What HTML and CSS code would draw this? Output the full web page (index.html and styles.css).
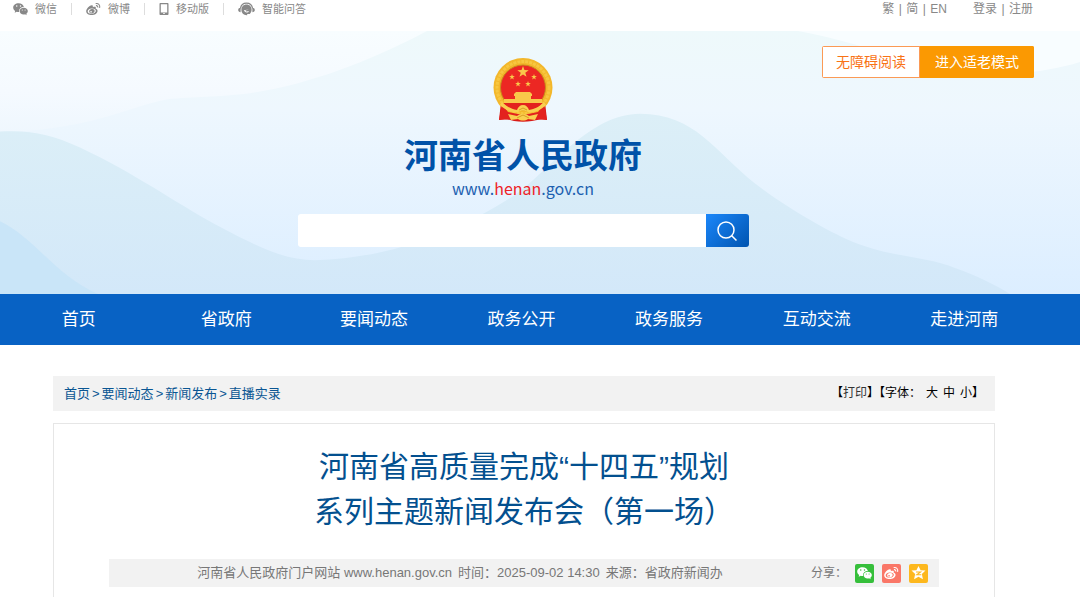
FILE: index.html
```
<!DOCTYPE html>
<html lang="zh-CN">
<head>
    <meta charset="utf-8">
    <title>河南省人民政府</title>
    <link rel="stylesheet" href="styles.css">
</head>
<body>
    <!-- Shared icons -->
    <svg class="sprite" aria-hidden="true">
        <symbol id="icon-wechat" viewBox="0 0 16 14">
            <path fill-rule="evenodd" d="M6 .8C2.7.8.2 2.8.2 5.4c0 1.500.8 2.800 2.100 3.700L1.800 11l2.200-1.200c.6.2 1.300.3 2 .3h.4C6.200 6.900 8.500 4.900 11.600 4.900 11.100 2.500 8.800.8 6 .8zM4 3.100a.8.8 0 1 1 0 1.600.8.8 0 0 1 0-1.600zm4 0a.8.8 0 1 1 0 1.600.8.8 0 0 1 0-1.600z"/>
            <path fill-rule="evenodd" d="M11.400 5.600c-2.500 0-4.400 1.600-4.400 3.600s1.900 3.700 4.400 3.700c.5 0 1-.1 1.500-.2l1.700.9-.4-1.500c1-.7 1.600-1.700 1.600-2.900 0-2-1.900-3.600-4.400-3.600zM9.900 7.400a.6.6 0 1 1 0 1.200.6.6 0 0 1 0-1.200zm3 0a.6.6 0 1 1 0 1.200.6.6 0 0 1 0-1.200z"/>
        </symbol>
        <symbol id="icon-weibo" viewBox="0 0 16 14">
            <path fill-rule="evenodd" d="M6.500 3.100c.9.200 1 .9.700 1.900 1.700-.7 3.500-.7 3.300.9l-.2.900c1.300.4 2 1.100 2 2.200 0 2.300-2.900 4.500-6.300 4.500C2.700 13.500.2 11.900.2 9.500c0-2.800 4.200-6.900 6.300-6.400zM6 6.500C3.500 6.600 1.700 8 1.800 9.700c.1 1.600 2.100 2.600 4.500 2.400 2.400-.2 4.300-1.600 4.200-3.200C10.400 7.300 8.400 6.400 6 6.500z"/>
            <path fill-rule="evenodd" d="M6.200 7.100c1.800-.3 3.200.7 3 2.200-.2 1.300-1.600 2.400-3.200 2.400s-2.800-1.100-2.600-2.400c.1-1.100 1.400-2 2.800-2.200zM5.400 9a.9.900 0 1 0 0 1.800.9.900 0 0 0 0-1.800z"/>
            <path class="stroke" d="M10.300 1.200c3-.6 5 1.700 4.200 4.700M10.600 3.400c1.400-.2 2.200.7 1.900 2"/>
        </symbol>
        <symbol id="icon-phone" viewBox="0 0 10 14">
            <path fill-rule="evenodd" d="M1.500 1h7c.6 0 1 .4 1 1v10c0 .6-.4 1-1 1h-7c-.6 0-1-.4-1-1V2c0-.6.4-1 1-1zm.3 1.300v8.200h6.400V2.300zM4 11.200v.8h2v-.8z"/>
        </symbol>
        <symbol id="icon-service" viewBox="0 0 17 14">
            <path class="stroke" d="M2.400 6.500C3 3 5.400 1.200 8.500 1.200S14 3 14.600 6.500"/>
            <path d="M2.600 5.800v4.400C1.200 10.200.2 9.300.2 8s1-2.200 2.400-2.200zM14.400 5.800v4.400c1.400 0 2.400-.9 2.400-2.200s-1-2.200-2.400-2.200z"/>
            <path fill-rule="evenodd" d="M8.500 2.600c3 0 5.100 2.200 5.100 5.200 0 1.700-.7 3.100-1.800 4.100H9.200v1.300C5.900 13.500 3.400 11.100 3.400 7.800c0-3 2.100-5.200 5.100-5.200zM6.100 8c0 2.600 3.600 3.300 5.100 1.200H9.400C8.600 9.900 7.600 9.500 7.500 8.600L11.500 7.300C10.600 7.600 6.900 8.100 6.100 8z"/>
        </symbol>
        <symbol id="star" viewBox="-10 -10 20 20">
            <path d="M0-10 2.400-3.200 9.500-3.100 3.800 1.200 5.900 8.100 0 4-5.900 8.100-3.800 1.200-9.500-3.100-2.400-3.200z"/>
        </symbol>
    </svg>

    <!-- Top bar -->
    <div class="topbar">
        <div class="top-links">
            <a href="#"><svg class="icon"><use href="#icon-wechat"/></svg>微信</a>
            <a href="#"><svg class="icon"><use href="#icon-weibo"/></svg>微博</a>
            <a href="#"><svg class="icon icon-narrow"><use href="#icon-phone"/></svg>移动版</a>
            <a href="#"><svg class="icon icon-wide"><use href="#icon-service"/></svg>智能问答</a>
        </div>
        <div class="top-right">
            <a href="#">繁</a><span class="bar">|</span><a href="#">简</a><span class="bar">|</span><a href="#">EN</a>
            <a class="login" href="#">登录</a><span class="bar">|</span><a href="#">注册</a>
        </div>
    </div>

    <!-- Banner -->
    <header class="banner">
        <svg class="waves" viewBox="0 0 1080 264" preserveAspectRatio="none" aria-hidden="true">
            <defs>
                <linearGradient id="sky" x1="0" y1="0" x2="0" y2="1">
                    <stop offset="0" stop-color="#eef9fb"/>
                    <stop offset=".3" stop-color="#eef7fe"/>
                    <stop offset="1" stop-color="#dceeff"/>
                </linearGradient>
                <linearGradient id="glow" x1="0" y1="0" x2="0" y2="1">
                    <stop offset="0" stop-color="#f8fdff"/>
                    <stop offset=".6" stop-color="#f5faff"/>
                    <stop offset="1" stop-color="#eff7fe"/>
                </linearGradient>
                <linearGradient id="hill" x1="0" y1="0" x2="0" y2="1">
                    <stop offset="0" stop-color="#dceff7"/>
                    <stop offset="1" stop-color="#d3e8f9"/>
                </linearGradient>
            </defs>
            <rect width="1080" height="264" fill="url(#sky)"/>
            <path fill="url(#glow)" d="M0 0H427C390 20 335 45 275 58 230 67 205 65 172 68 130 74 100 98 0 102z"/>
            <path fill="#f8fdff" d="M798 0C840 8 870 18 905 29 960 47 1030 47 1080 31V0z"/>
            <path fill="url(#hill)" d="M0 101C30 99 52 104 80 117 135 143 175 172 215 194 260 218 285 230 315 230 400 228 470 194 517 163 550 139 590 83 640 83 695 83 715 121 755 153 790 180 840 208 862 215 895 227 930 227 955 238 980 247 995 255 1010 264H0z"/>
            <path fill="#c9e5f8" d="M0 191C35 208 55 245 98 264H0z"/>
        </svg>

        <div class="modes">
            <a class="mode" href="#">无障碍阅读</a>
            <a class="mode mode-on" href="#">进入适老模式</a>
        </div>

        <div class="brand">
            <svg class="emblem" viewBox="0 0 60 64" aria-hidden="true">
                <path fill="#d81b17" d="M8 44 6 62c6-2 11 0 15 1 6 1 12 1 18 0 5-1 10-3 15-1l-2-18z"/>
                <path fill="#a91212" d="m12 49-2 11 5 1zM48 49l2 11-5 1z"/>
                <circle cx="30" cy="29.500" r="29.500" fill="#f3b72b"/>
                <circle cx="30" cy="29.500" r="26" fill="none" stroke="#f7c740" stroke-width="3" stroke-dasharray="3 1"/>
                <circle cx="30" cy="29.500" r="22.500" fill="#ec2723" stroke="#c98a1d"/>
                <g fill="#f9c84a">
                    <use href="#star" x="24" y="8" width="12" height="12"/>
                    <use href="#star" x="16" y="16" width="6" height="6"/>
                    <use href="#star" x="38" y="16" width="6" height="6"/>
                    <use href="#star" x="22" y="23" width="6" height="6"/>
                    <use href="#star" x="32" y="23" width="6" height="6"/>
                    <path d="M21 36l2-2h14l2 2v2h-1v3h11v4H11v-4h11v-3h-1z"/>
                </g>
                <path fill="#e3221e" d="M10 45h40l-7 7H17zM9 46l6 8 15 3 15-3 6-8 3 16-12-1-12 2-12-2-12 1z"/>
                <path fill="#f9cf50" d="M9 44c5 5 9 7 15 8 1-3 3-5 6-5s5 2 6 5c6-1 10-3 15-8l2 3c-5 5-12 8-18 7-3-2-7-2-10 0-6 1-13-2-18-7z"/>
                <path fill="#f9cf50" d="M15 56l9 2c4-3 8-3 12 0l9-2-3 6-7-1c-3 2-7 2-10 0l-7 1z"/>
                <path fill="none" stroke="#d99b22" d="M26 52l4-2 4 2M24 60l6-3 6 3"/>
            </svg>
            <h1>河南省人民政府</h1>
            <p class="site-url">www.<span>henan</span>.gov.cn</p>
            <form class="search">
                <input type="text" aria-label="搜索">
                <button type="button" aria-label="搜索">
                    <svg viewBox="0 0 22 22"><circle cx="10" cy="10" r="8"/><path d="M15.500 15.500 20.500 20.500"/></svg>
                </button>
            </form>
        </div>
    </header>

    <!-- Main navigation -->
    <nav class="nav">
        <a href="#">首页</a>
        <a href="#">省政府</a>
        <a href="#">要闻动态</a>
        <a href="#">政务公开</a>
        <a href="#">政务服务</a>
        <a href="#">互动交流</a>
        <a href="#">走进河南</a>
    </nav>

    <main class="content">
        <div class="location">
            <div class="crumbs">
                <a href="#">首页</a><span>&gt;</span><a href="#">要闻动态</a><span>&gt;</span><a href="#">新闻发布</a><span>&gt;</span><a href="#">直播实录</a>
            </div>
            <div class="tools">
                <span>【<a class="print" href="#">打印</a>】【字体：</span>
                <a href="#">大</a><a href="#">中</a><span><a href="#">小</a>】</span>
            </div>
        </div>

        <article class="article">
            <h2>河南省高质量完成“十四五”规划<br>系列主题新闻发布会（第一场）</h2>
            <div class="meta">
                <div class="source">
                    <span>河南省人民政府门户网站 www.henan.gov.cn</span>
                    <span>时间：2025-09-02 14:30</span>
                    <span>来源：省政府新闻办</span>
                </div>
                <div class="share">
                    <span>分享：</span>
                    <a class="share-wechat" href="#" aria-label="微信"><svg><use href="#icon-wechat"/></svg></a>
                    <a class="share-weibo" href="#" aria-label="微博"><svg><use href="#icon-weibo"/></svg></a>
                    <a class="share-qzone" href="#" aria-label="QQ空间"><svg viewBox="-10 -10 20 20"><path d="M0-10 3-4 10-3.400 4.800 1.500 6.300 9 0 5.200-6.300 9-4.800 1.500-10-3.400-3-4z"/><path class="swirl" d="M-3.500-1.500H3L-2.500 2.500H4"/></svg></a>
                </div>
            </div>
        </article>
    </main>
</body>
</html>
```
FILE: styles.css
```
* {
    box-sizing: border-box;
}
body {
    margin: 0;
    background: #fff;
    font-family: "Liberation Sans", "Noto Sans CJK SC", sans-serif;
    color: #333;
}
a {
    color: inherit;
    text-decoration: none;
}
.sprite {
    display: none;
}
.stroke {
    fill: none;
    stroke: currentColor;
    stroke-width: 1.2;
}

/* Top bar */
.topbar {
    display: flex;
    justify-content: space-between;
    height: 31px;
    padding: 0 47px 0 13px;
    font-size: 11px;
    line-height: 18px;
    color: #888;
}
.top-links {
    display: flex;
}
.top-links a {
    display: flex;
    align-items: center;
    height: 18px;
}
.top-links a + a::before {
    content: "";
    width: 1px;
    height: 12px;
    margin: 0 14px;
    background: #ddd;
}
.icon {
    width: 15px;
    height: 14px;
    margin-right: 7px;
    fill: currentColor;
}
.icon-narrow {
    width: 10px;
}
.icon-wide {
    width: 17px;
}
.top-right {
    display: flex;
    font-size: 12px;
}
.bar {
    width: 12px;
    text-align: center;
}
.login {
    margin-left: 26px;
}

/* Banner */
.banner {
    position: relative;
    padding: 27px 87px 47px 53px;
}
.waves {
    position: absolute;
    top: 0;
    left: 0;
    width: 100%;
    height: 100%;
}
.modes {
    position: absolute;
    top: 15px;
    right: 46px;
    display: flex;
    border-radius: 2px;
    overflow: hidden;
}
.mode {
    padding: 0 13px;
    border: 1px solid #fb9a55;
    background: #fff;
    color: #f97316;
    font-size: 14px;
    line-height: 30px;
}
.mode-on {
    padding: 0 14px;
    border-color: #fb9902;
    background: #fb9902;
    color: #fff;
}
.brand {
    position: relative;
    display: flex;
    flex-direction: column;
    align-items: center;
}
.emblem {
    width: 60px;
    height: 64px;
}
.brand h1 {
    margin: 12px 0 0;
    color: #0052a8;
    font-size: 34px;
    line-height: 44px;
}
.site-url {
    margin: 0;
    color: #1c60b0;
    font-family: "Noto Sans CJK SC", sans-serif;
    font-size: 16px;
    line-height: 20px;
}
.site-url span {
    color: #ee2328;
}
.search {
    display: flex;
    width: 451px;
    height: 33px;
    margin-top: 16px;
}
.search input {
    flex: 1;
    min-width: 0;
    padding: 0 10px;
    border: 0;
    border-radius: 3px 0 0 3px;
    background: #fff;
}
.search button {
    display: flex;
    align-items: center;
    justify-content: center;
    width: 43px;
    padding: 0;
    border: 0;
    border-radius: 0 3px 3px 0;
    background: linear-gradient(135deg, #1b87fa, #0054b0);
    cursor: pointer;
}
.search svg {
    width: 22px;
    height: 22px;
    fill: none;
    stroke: #fff;
    stroke-width: 1.5;
}

/* Navigation */
.nav {
    display: flex;
    padding: 0 42px 0 5px;
    background: #0862c4;
}
.nav a {
    flex: 1;
    color: #fff;
    font-size: 17px;
    line-height: 51px;
    text-align: center;
}

/* Content */
.content {
    padding: 31px 85px 0 53px;
}
.location {
    display: flex;
    justify-content: space-between;
    padding: 0 11px;
    background: #f2f2f2;
    font-size: 13px;
    line-height: 35px;
}
.crumbs {
    display: flex;
    gap: 2px;
    color: #0a5693;
}
.tools {
    display: flex;
    gap: 5px;
    color: #000;
    font-size: 12px;
}
.print {
    color: #333;
}
.article {
    margin-top: 12px;
    padding: 20px 55px 10px;
    border: 1px solid #e6e6e6;
    border-bottom: 0;
}
.article h2 {
    margin: 0;
    color: #03508f;
    font-size: 30px;
    font-weight: normal;
    line-height: 45px;
    text-align: center;
}
.meta {
    display: flex;
    justify-content: flex-end;
    margin-top: 25px;
    padding-right: 11px;
    background: #f2f2f2;
    color: #777;
    font-size: 13px;
    line-height: 28px;
}
.source {
    display: flex;
    flex: 1;
    justify-content: center;
    gap: 6px;
}
.share {
    display: flex;
    align-items: center;
    gap: 8px;
    font-size: 12px;
}
.share a {
    display: flex;
    align-items: center;
    justify-content: center;
    width: 19px;
    height: 19px;
    border-radius: 2px;
    color: #fff;
}
.share svg {
    width: 15px;
    height: 14px;
    fill: #fff;
}
.share-wechat {
    background: #36bf3b;
}
.share-weibo {
    background: #fa7768;
}
.share-qzone {
    background: #fdb81e;
}
.share .swirl {
    fill: none;
    stroke: #fdb81e;
    stroke-width: 1.5;
}
```
